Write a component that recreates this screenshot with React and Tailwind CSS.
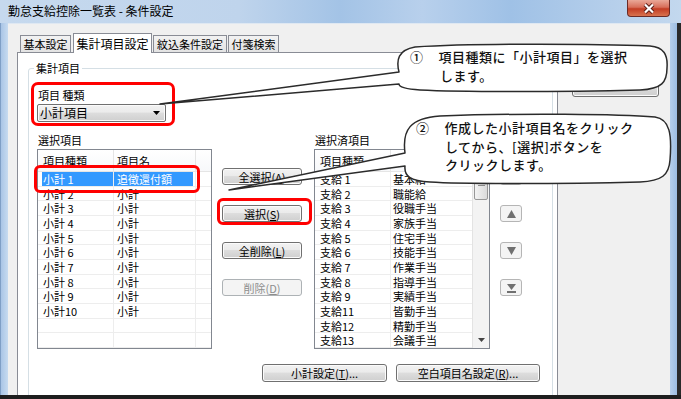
import React from 'react';

const font = "font-['Noto_Sans_CJK_JP','Noto_Sans',sans-serif]";

const leftRows = [
  ['小計 1', '追徴還付額'],
  ['小計 2', '小計'],
  ['小計 3', '小計'],
  ['小計 4', '小計'],
  ['小計 5', '小計'],
  ['小計 6', '小計'],
  ['小計 7', '小計'],
  ['小計 8', '小計'],
  ['小計 9', '小計'],
  ['小計10', '小計'],
  ['', ''],
  ['', ''],
];

const rightRows = [
  ['支給 1', '基本給'],
  ['支給 2', '職能給'],
  ['支給 3', '役職手当'],
  ['支給 4', '家族手当'],
  ['支給 5', '住宅手当'],
  ['支給 6', '技能手当'],
  ['支給 7', '作業手当'],
  ['支給 8', '指導手当'],
  ['支給 9', '実績手当'],
  ['支給11', '皆勤手当'],
  ['支給12', '精勤手当'],
  ['支給13', '会議手当'],
];

function Btn({ children, className = '', disabled }) {
  return (
    <div
      className={`flex items-center justify-center rounded-[3px] border text-[11px] leading-[14px] ${
        disabled
          ? 'border-[#adb2b5] bg-[#f4f4f4] text-[#8d8d8d]'
          : 'border-[#707070] bg-[linear-gradient(#f2f2f2_0%,#ebebeb_45%,#dddddd_50%,#cfcfcf_100%)] shadow-[inset_0_0_0_1px_#fbfbfb] text-black'
      } ${className}`}
    >
      {children}
    </div>
  );
}

function ArrowBtn({ kind }) {
  return (
    <div className="h-[17px] w-[22px] flex items-center justify-center rounded-[3px] border border-[#b5b5b5] bg-[#f4f4f4]">
      <svg width="11" height="10" viewBox="0 0 11 10" className="fill-[#707070]">
        {kind === 'top' && (
          <>
            <rect x="1" y="0" width="9" height="2" />
            <polygon points="1,9 10,9 5.5,3" />
          </>
        )}
        {kind === 'up' && <polygon points="1,9 10,9 5.5,1" />}
        {kind === 'down' && <polygon points="1,1 10,1 5.5,9" />}
        {kind === 'bottom' && (
          <>
            <polygon points="1,1 10,1 5.5,7" />
            <rect x="1" y="8" width="9" height="2" />
          </>
        )}
      </svg>
    </div>
  );
}

function LeftList() {
  return (
    <div className="h-[200px] border border-[#828790] bg-white flex flex-col overflow-hidden">
      <div className="h-[22px] flex text-[11px] leading-[22px] bg-[linear-gradient(#ffffff,#f7f8fa)] border-b border-[#e5e5e5]">
        <div className="w-[75px] pl-[5px]">項目種類</div>
        <div className="w-[82px] pl-[3px] border-l border-[#e5e5e5]">項目名</div>
        <div className="flex-1 border-l border-[#e5e5e5]" />
      </div>
      {leftRows.map(([a, b], i) => {
        const sel = i === 0 ? 'bg-[#3399ff] text-white' : '';
        return (
          <div key={i} className="flex h-[14.67px] shrink-0 text-[11px] leading-[14px] border-b border-[#ededed]">
            <div className="w-[75px] pl-[4px] h-full">
              <div className={`h-full pl-[1px] whitespace-pre ${sel}`}>{a}</div>
            </div>
            <div className="w-[82px] pr-[2px] h-full border-l border-[#ededed]">
              <div className={`h-full pl-[3px] ${sel}`}>{b}</div>
            </div>
            <div className="flex-1 border-l border-[#ededed]" />
          </div>
        );
      })}
    </div>
  );
}

function RightList() {
  return (
    <div className="h-[200px] border border-[#828790] bg-white flex overflow-hidden">
      <div className="flex-1 flex flex-col">
        <div className="h-[22px] flex text-[11px] leading-[22px] bg-[linear-gradient(#ffffff,#f7f8fa)] border-b border-[#e5e5e5]">
          <div className="w-[75px] pl-[5px]">項目種類</div>
          <div className="flex-1 pl-[3px] border-l border-[#e5e5e5]">項目名</div>
        </div>
        {rightRows.map(([a, b], i) => (
          <div key={i} className="flex h-[14.67px] shrink-0 text-[11px] leading-[14px] border-b border-[#ededed]">
            <div className="w-[75px] pl-[5px] whitespace-pre">{a}</div>
            <div className="flex-1 pl-[2px] border-l border-[#ededed]">{b}</div>
          </div>
        ))}
      </div>
      {/* スクロールバー */}
      <div className="w-[17px] border-l border-[#e3e3e3] bg-[#f3f3f3] flex flex-col">
        <div className="h-[17px]" />
        <div className="h-[33px] mx-[1px] rounded-[2px] border border-[#979797] bg-[linear-gradient(90deg,#f3f3f3,#dadada)] flex flex-col items-center justify-center gap-[1px]">
          <div className="w-[7px] h-px bg-[#8a8a8a]" />
          <div className="w-[7px] h-px bg-[#8a8a8a]" />
          <div className="w-[7px] h-px bg-[#8a8a8a]" />
        </div>
        <div className="flex-1" />
        <div className="h-[17px] flex items-center justify-center">
          <svg width="7" height="4" viewBox="0 0 7 4" className="fill-[#444]">
            <polygon points="0,0 7,0 3.5,4" />
          </svg>
        </div>
      </div>
    </div>
  );
}

function CloseButton() {
  return (
    <div className="w-[43px] h-[17px] rounded-b-[4px] border border-t-0 border-[#6b2b26] bg-[linear-gradient(#eaa898_0%,#d86f5a_45%,#c33d24_55%,#d8734f_100%)] flex items-center justify-center">
      <svg width="14" height="11" viewBox="0 0 14 11">
        <path d="M3 1.5 L11 9.5 M11 1.5 L3 9.5" stroke="#5a1d16" strokeWidth="4" />
        <path d="M3 1.5 L11 9.5 M11 1.5 L3 9.5" stroke="#ffffff" strokeWidth="2.2" />
      </svg>
    </div>
  );
}

export default function App() {
  return (
    <div className={`relative w-[681px] h-[399px] overflow-hidden flex flex-col bg-[#b9d1ea] text-black ${font}`}>
      {/* タイトルバー */}
      <div className="h-[23px] flex shrink-0 bg-[linear-gradient(90deg,#c6d9ee_0%,#bfd4ec_35%,#a3c3e6_50%,#b8d0ec_62%,#9fc1e6_75%,#b6cfeb_90%,#c3d8ee_100%)]">
        <div className="pl-[8px] pt-[3px] text-[12px] leading-[16px]">勤怠支給控除一覧表 - 条件設定</div>
        <div className="flex-1" />
        <CloseButton />
        <div className="w-[11px]" />
      </div>

      <div className="flex flex-1 min-h-0">
        <div className="w-[8px] border-l border-[#7f9fc6] bg-[linear-gradient(90deg,#a9c5e6,#c7dbf0)]" />

        <div className="flex-1 flex flex-col bg-[#f0f0f0] border-t border-[#dfe8f2] text-[11px]">
          {/* タブ */}
          <div className="flex items-end pt-[9px] pl-[12px]">
            <div className="w-[51px] h-[17px] flex items-center justify-center border border-b-0 border-[#898c95] bg-[linear-gradient(#f2f2f2,#e3e3e3)]">基本設定</div>
            <div className="relative z-10 ml-[2px] -mb-px w-[79px] h-[20px] flex items-center justify-center border border-b-0 border-[#898c95] bg-white text-[12px]">集計項目設定</div>
            <div className="ml-px w-[74px] h-[17px] flex items-center justify-center border border-b-0 border-[#898c95] bg-[linear-gradient(#f2f2f2,#e3e3e3)]">紋込条件設定</div>
            <div className="ml-px w-[51px] h-[17px] flex items-center justify-center border border-b-0 border-[#898c95] bg-[linear-gradient(#f2f2f2,#e3e3e3)]">付箋検索</div>
          </div>

          <div className="flex flex-1 min-h-0">
            {/* タブパネル */}
            <div className="ml-[9px] w-[541px] border border-b-0 border-[#898c95] bg-white pt-[15px] pl-[10px] pr-[4px] overflow-hidden">
              <div className="h-[400px] border border-[#d5dfe5] rounded-[3px]">
                <span className="block w-fit -mt-[8px] ml-[5px] px-[2px] bg-white leading-[14px]">集計項目</span>
                <div className="pl-[8px]">
                  <div className="mt-[13px] pl-[1px] leading-[14px]">項目 種類</div>
                  <div className="mt-[2px] w-[129px] h-[18px] flex items-center rounded-[2px] border border-[#707070] bg-[linear-gradient(#f2f2f2_0%,#ebebeb_45%,#dddddd_50%,#cfcfcf_100%)] shadow-[inset_0_0_0_1px_#fbfbfb]">
                    <span className="flex-1 pl-[2px] text-[12px] leading-[16px]">小計項目</span>
                    <svg width="7" height="4" viewBox="0 0 7 4" className="mr-[5px] fill-black">
                      <polygon points="0,0 7,0 3.5,4" />
                    </svg>
                  </div>

                  <div className="mt-[11px] flex">
                    <div className="w-[175px]">
                      <div className="pl-[1px] leading-[14px]">選択項目</div>
                      <div className="mt-[2px]">
                        <LeftList />
                      </div>
                    </div>

                    <div className="ml-[10px] w-[80px] pt-[35px] flex flex-col gap-[20px]">
                      <Btn className="h-[17px]">全選択(<span className="underline">A</span>)</Btn>
                      <Btn className="h-[17px]">選択(<span className="underline">S</span>)</Btn>
                      <Btn className="h-[17px]">全削除(<span className="underline">L</span>)</Btn>
                      <Btn className="h-[17px]" disabled>削除(<span className="underline">D</span>)</Btn>
                    </div>

                    <div className="ml-[12px] w-[176px]">
                      <div className="pl-[1px] leading-[14px]">選択済項目</div>
                      <div className="mt-[2px]">
                        <RightList />
                      </div>
                    </div>

                    <div className="ml-[10px] w-[22px] pt-[35px] flex flex-col gap-[20px]">
                      <ArrowBtn kind="top" />
                      <ArrowBtn kind="up" />
                      <ArrowBtn kind="down" />
                      <ArrowBtn kind="bottom" />
                    </div>
                  </div>

                  <div className="mt-[15px] flex">
                    <Btn className="ml-[225px] w-[125px] h-[18px]">小計設定(<span className="underline">T</span>)...</Btn>
                    <Btn className="ml-[9px] w-[144px] h-[18px]">空白項目名設定(<span className="underline">R</span>)...</Btn>
                  </div>
                </div>
              </div>
            </div>

            {/* 右側 */}
            <div className="flex-1">
              <Btn className="ml-[14px] mt-[22px] w-[87px] h-[23px]" />
            </div>
          </div>
        </div>

        <div className="w-[11px] bg-[linear-gradient(90deg,#b6cfeb,#9dbde2)] border-r-[4px] border-[#2a2a2a]" />
      </div>
      <div className="h-[4px] shrink-0 bg-[#1e1e1e]" />

      {/* 赤枠 */}
      <div className="absolute left-[31px] top-[82px] w-[144px] h-[44px] border-[3px] border-[#ff0000] rounded-[7px]" />
      <div className="absolute left-[34px] top-[165px] w-[166px] h-[28px] border-[3px] border-[#ff0000] rounded-[6px]" />
      <div className="absolute left-[217px] top-[198px] w-[95px] h-[27px] border-[3px] border-[#ff0000] rounded-[6px]" />

      {/* 吹き出し */}
      <svg className="absolute inset-0 pointer-events-none" width="681" height="399" viewBox="0 0 681 399">
        <path
          d="M 399 72 C 396 60 398 50 415 47 C 480 43 600 44 650 46 C 664 47 668 55 667 68 C 667 82 662 89 640 90 C 560 92 460 92 420 90 C 405 89 399 87 399 84 L 160 104 Z"
          fill="#ffffff"
          stroke="#2b2b2b"
          strokeWidth="1.5"
          strokeLinejoin="round"
        />
        <path
          d="M 405 153 C 402 130 410 118 440 116 C 520 113 620 114 655 117 C 670 119 672 135 670 160 C 669 175 662 181 640 182 C 560 184 460 184 430 182 C 410 181 404 176 405 166 L 229 190 Z"
          fill="#ffffff"
          stroke="#2b2b2b"
          strokeWidth="1.5"
          strokeLinejoin="round"
        />
      </svg>

      <div className="absolute left-[410px] top-[47px] text-[13px] leading-[19px] tracking-[0.5px] font-medium text-[#111]">
        <div>
          <span>①</span>
          <span className="ml-[15px]">項目種類に「小計項目」を選択</span>
        </div>
        <div className="pl-[30px]">します。</div>
      </div>

      <div className="absolute left-[416px] top-[119px] text-[13px] leading-[18.5px] tracking-[0.5px] font-medium text-[#111]">
        <div>
          <span>②</span>
          <span className="ml-[15px]">作成した小計項目名をクリック</span>
        </div>
        <div className="pl-[29px]">してから、[選択]ボタンを</div>
        <div className="pl-[29px]">クリックします。</div>
      </div>
    </div>
  );
}
